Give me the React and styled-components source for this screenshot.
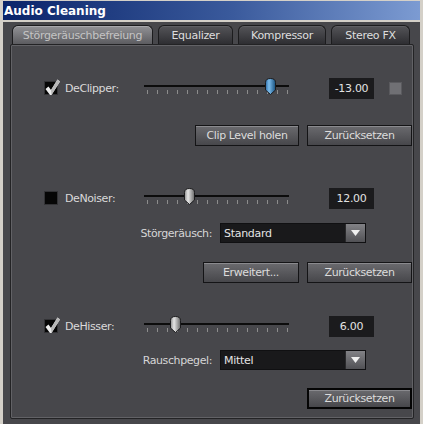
import styled, { createGlobalStyle } from 'styled-components';

const Global = createGlobalStyle`
  body {
    margin: 0;
    background: #47474b;
    font-family: "DejaVu Sans", "Liberation Sans", sans-serif;
  }
`;

const Window = styled.div`
  width: 423px;
  height: 424px;
  box-sizing: border-box;
  display: flex;
  flex-direction: column;
  background: #47474b;
  border-top: 1px solid #d4d0c8;
  border-left: 3px solid #d4d0c8;
  border-right: 3px solid #d4d0c8;
  overflow: hidden;
`;

const TitleBar = styled.div`
  height: 19px;
  display: flex;
  align-items: center;
  padding-left: 1px;
  background: linear-gradient(90deg, #0a246a 0%, #3a5a9c 55%, #7c9bd2 100%);
  border-bottom: 2px solid #d4d0c8;
  color: #fff;
  font-weight: bold;
  font-size: 12px;
`;

const Body = styled.div`
  flex: 1;
  display: flex;
  flex-direction: column;
  padding: 3px 6px 5px 7px;
`;

const TabBar = styled.div`
  display: flex;
  gap: 5px;
  padding-left: 2px;
  height: 19px;
  position: relative;
  z-index: 1;
`;

const Tab = styled.div`
  width: ${p => p.w}px;
  box-sizing: border-box;
  display: flex;
  align-items: center;
  justify-content: center;
  border: 1px solid #1c1c1e;
  border-bottom: none;
  border-radius: 6px 6px 0 0;
  font-size: 11px;
  letter-spacing: -0.3px;
  color: ${p => (p.active ? '#c4c4c4' : '#dedede')};
  background: ${p =>
    p.active
      ? 'linear-gradient(#929296, #5c5c60)'
      : 'linear-gradient(#545458, #2e2e32)'};
  box-shadow: inset 0 1px 0 ${p => (p.active ? '#a8a8ac' : '#5e5e62')};
`;

const Panel = styled.div`
  flex: 1;
  display: flex;
  flex-direction: column;
  padding: 32px 1px 0 0;
  border: 1px solid #232325;
  border-radius: 2px;
  box-shadow: inset 0 0 0 1px #626266;
`;

const ControlRow = styled.div`
  display: flex;
  align-items: center;
  height: 22px;
  padding-left: 33px;
  margin-top: ${p => p.mt || 0}px;
`;

const CheckLabel = styled.label`
  width: 100px;
  display: flex;
  align-items: center;
  gap: 7px;
  font-size: 11px;
  letter-spacing: -0.4px;
  color: #dadada;
`;

const Box = styled.span`
  width: 14px;
  height: 14px;
  box-sizing: border-box;
  background: #060606;
  border: 1px solid #333336;
  position: relative;
  svg {
    position: absolute;
    left: -1px;
    top: -4px;
  }
`;

const SliderWrap = styled.div`
  width: 145px;
  height: 22px;
  position: relative;
`;

const Track = styled.div`
  margin-top: 8px;
  height: 2px;
  background: #0c0c0c;
`;

const Ticks = styled.div`
  margin-top: 3px;
  display: flex;
  justify-content: space-between;
  padding: 0 1px 0 3px;
  span {
    width: 1px;
    height: 4px;
    background: #8c8c8c;
  }
`;

const Handle = styled.svg`
  position: absolute;
  top: 1px;
`;

const Value = styled.div`
  width: 45px;
  height: 21px;
  margin-left: 40px;
  display: flex;
  align-items: center;
  justify-content: center;
  background: #1b1b1d;
  color: #e2e2e2;
  font-size: 11px;
  letter-spacing: -0.3px;
`;

const Square = styled.div`
  width: 13px;
  height: 13px;
  margin-left: 15px;
  background: #707074;
  border: 1px solid #5a5a5e;
  box-sizing: border-box;
`;

const ButtonRow = styled.div`
  display: flex;
  justify-content: flex-end;
  gap: 8px;
  margin-top: ${p => p.mt}px;
`;

const Button = styled.button`
  width: ${p => p.w}px;
  height: 21px;
  box-sizing: border-box;
  padding: 0;
  font-family: inherit;
  font-size: 11px;
  letter-spacing: -0.4px;
  color: #dcdcdc;
  border: ${p => (p.primary ? '2px solid #050505' : '1px solid #141416')};
  background: linear-gradient(#6a6a6e, #47474b);
  box-shadow: inset 0 1px 0 #8a8a8e;
`;

const SelectRow = styled.div`
  display: flex;
  align-items: center;
  gap: 8px;
  margin-top: ${p => p.mt}px;
`;

const SelectLabel = styled.div`
  width: 201px;
  text-align: right;
  font-size: 11px;
  letter-spacing: -0.4px;
  color: #d6d6d6;
`;

const Select = styled.div`
  width: 146px;
  height: 20px;
  box-sizing: border-box;
  display: flex;
  background: #19191b;
  border: 1px solid #101012;
  font-size: 11px;
  letter-spacing: -0.3px;
  color: #e4e4e4;
`;

const SelectText = styled.div`
  flex: 1;
  display: flex;
  align-items: center;
  padding-left: 3px;
`;

const Arrow = styled.div`
  width: 19px;
  display: flex;
  align-items: center;
  justify-content: center;
  background: linear-gradient(#828286, #515155);
  border-left: 1px solid #2a2a2c;
`;

function Check() {
  return (
    <svg width="17" height="18" viewBox="0 0 17 18">
      <path d="M1.5 11 L4.5 8.5 L7 12 L13.5 1.5 L16 3.5 L7.5 17 L6 17 Z" fill="#ececec" />
      <path d="M7 12 L13.5 1.5 L16 3.5 L7.5 17 Z" fill="#b8b8b8" />
    </svg>
  );
}

function Slider({ pos, blue }) {
  const id = blue ? 'hb' : 'hg';
  return (
    <SliderWrap>
      <Track />
      <Ticks>
        {Array.from({ length: 15 }).map((_, i) => (
          <span key={i} />
        ))}
      </Ticks>
      <Handle width="11" height="17" viewBox="0 0 11 17" style={{ left: pos - 5 }}>
        <defs>
          <linearGradient id={id} x1="0" x2="1" y1="0" y2="0">
            <stop offset="0" stopColor={blue ? '#2c6ca8' : '#8c8c8c'} />
            <stop offset="0.35" stopColor={blue ? '#7cbcec' : '#e6e6e6'} />
            <stop offset="1" stopColor={blue ? '#16507e' : '#6a6a6a'} />
          </linearGradient>
        </defs>
        <path
          d="M0.5 4.5 Q0.5 0.5 5.5 0.5 Q10.5 0.5 10.5 4.5 L10.5 12 L5.5 16.5 L0.5 12 Z"
          fill={`url(#${id})`}
          stroke="#1c1c1e"
          strokeWidth="1"
        />
      </Handle>
    </SliderWrap>
  );
}

function Control({ label, checked, pos, blue, value, square, mt }) {
  return (
    <ControlRow mt={mt}>
      <CheckLabel>
        <Box>{checked && <Check />}</Box>
        {label}
      </CheckLabel>
      <Slider pos={pos} blue={blue} />
      <Value>{value}</Value>
      {square && <Square />}
    </ControlRow>
  );
}

function Dropdown({ label, value, mt }) {
  return (
    <SelectRow mt={mt}>
      <SelectLabel>{label}</SelectLabel>
      <Select>
        <SelectText>{value}</SelectText>
        <Arrow>
          <svg width="9" height="6" viewBox="0 0 9 6">
            <path d="M0 0 L9 0 L4.5 6 Z" fill="#f0f0f0" />
          </svg>
        </Arrow>
      </Select>
    </SelectRow>
  );
}

export default function App() {
  return (
    <>
      <Global />
      <Window>
        <TitleBar>Audio Cleaning</TitleBar>
        <Body>
          <TabBar>
            <Tab w={141} active>Störgeräuschbefreiung</Tab>
            <Tab w={75}>Equalizer</Tab>
            <Tab w={88}>Kompressor</Tab>
            <Tab w={79}>Stereo FX</Tab>
          </TabBar>
          <Panel>
            <Control label="DeClipper:" checked pos={126} blue value="-13.00" square />
            <ButtonRow mt={26}>
              <Button w={104}>Clip Level holen</Button>
              <Button w={105}>Zurücksetzen</Button>
            </ButtonRow>

            <Control label="DeNoiser:" pos={45} value="12.00" mt={41} />
            <Dropdown label="Störgeräusch:" value="Standard" mt={14} />
            <ButtonRow mt={19}>
              <Button w={96}>Erweitert...</Button>
              <Button w={105}>Zurücksetzen</Button>
            </ButtonRow>

            <Control label="DeHisser:" checked pos={31} value="6.00" mt={32} />
            <Dropdown label="Rauschpegel:" value="Mittel" mt={13} />
            <ButtonRow mt={18}>
              <Button w={105} primary>Zurücksetzen</Button>
            </ButtonRow>
          </Panel>
        </Body>
      </Window>
    </>
  );
}
